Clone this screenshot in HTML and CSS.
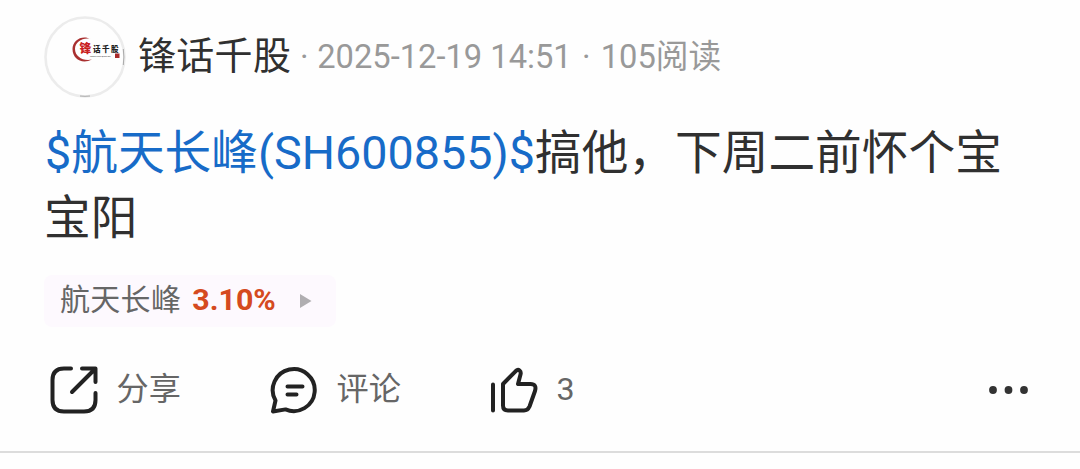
FILE: index.html
```html
<!DOCTYPE html>
<html lang="zh-CN">
<head>
<meta charset="utf-8">
<title>锋话千股</title>
<link rel="stylesheet" href="styles.css">
</head>
<body>
<article class="post">
  <header class="head">
    <div class="avatar">
      <svg viewBox="0 0 82 82" width="82" height="82">
        <circle cx="41" cy="41" r="39.5" fill="#fefefe" stroke="#ececec" stroke-width="2.6"/>
        <path d="M47 23C38 18.500 28.500 24 28.500 33C28.500 43 38 48.500 48 43.500C39 45.500 31 40.500 31 33C31 26 39 21 47 23Z" fill="#a93030"/>
        <path d="M79.300 33Q80.500 41 79.300 49M36 80Q41 80.600 46 80" fill="none" stroke="#aaa" stroke-width="1"/>
        <text x="35.500" y="36.500" class="logo-main">锋</text>
        <text x="49" y="35.500" class="logo-rest">话千股</text>
        <text x="46" y="41" class="logo-sub">FENG HUA QIAN GU</text>
        <rect x="71" y="37.500" width="4.500" height="4.500" fill="#a92a2a"/>
      </svg>
    </div>
    <span class="name">锋话千股</span>
    <span class="meta"><span class="dot">·</span><span class="date">2025-12-19 14:51</span><span class="dot dot-wide">·</span><span class="reads">105阅读</span></span>
  </header>
  <p class="content"><a class="stock">$航天长峰(SH600855)$</a>搞他，下周二前怀个宝宝阳</p>
  <div class="tag">
    <span class="tag-name">航天长峰</span>
    <span class="tag-rate">3.10%</span>
    <svg class="tag-arrow" viewBox="0 0 12 14" width="12" height="14"><path d="M0 0L11.500 7L0 14Z" fill="#b0aeb1"/></svg>
  </div>
  <footer class="actions">
    <div class="action">
      <svg class="icon" viewBox="0 0 50 50" width="50" height="50">
        <path d="M22 3.500H15Q3.500 3.500 3.500 15V35Q3.500 46.500 15 46.500H35Q46.500 46.500 46.500 35V28M33 3.500H46.500V17M45.500 4.500L23 27"/>
      </svg>
      <span class="label">分享</span>
    </div>
    <div class="action">
      <svg class="icon" viewBox="0 0 50 50" width="50" height="50">
        <path d="M4 46.500L6.500 35.500A21 21 0 1 1 16.500 44.400Z M18.500 21.500H33.500M18.500 29.500H27.500"/>
      </svg>
      <span class="label">评论</span>
    </div>
    <div class="action">
      <svg class="icon" viewBox="0 0 50 50" width="50" height="50">
        <path d="M4 19.500V45.500M14 19L27 5.800C29.500 3.400 32.500 6 31.500 9.500L29 19H41.500Q48 19 46 26L40.500 41.500Q38.700 45.500 35 45.500H19Q14 45.500 14 40.500Z"/>
      </svg>
      <span class="label">3</span>
    </div>
    <svg class="more" viewBox="0 0 40 8" width="40" height="8" fill="#333"><circle cx="5" cy="4" r="3.900"/><circle cx="20.500" cy="4" r="3.900"/><circle cx="36" cy="4" r="3.900"/></svg>
  </footer>
</article>
</body>
</html>
```
FILE: styles.css
```css
body {
  margin: 0;
  background: #fefefe;
  font-family: Roboto, "Noto Sans CJK SC", sans-serif;
}
.post {
  box-sizing: border-box;
  height: 453px;
  padding: 16px 44px 0;
  border-bottom: 2px solid #dcdcdc;
}
.head {
  display: flex;
  align-items: flex-start;
  height: 82px;
  white-space: nowrap;
}
.avatar {
  width: 82px;
  height: 82px;
  margin-right: 12px;
}
.logo-main {
  font: 900 12px "Noto Sans CJK SC", sans-serif;
  fill: #c9221f;
}
.logo-rest {
  font: 900 7.5px "Noto Sans CJK SC", sans-serif;
  letter-spacing: 1.5px;
  fill: #222;
}
.logo-sub {
  font: 700 2.3px Roboto, sans-serif;
  fill: #555;
}
.name {
  font-size: 38px;
  line-height: 81px;
  letter-spacing: 0.3px;
  color: #303030;
}
.meta {
  display: flex;
  font-size: 32.7px;
  line-height: 82px;
  color: #999;
}
.dot {
  width: 26px;
  text-align: center;
}
.dot-wide {
  width: 29px;
}
.content {
  margin: 23px 0 0;
  font-size: 46.7px;
  line-height: 65px;
  color: #303030;
  word-break: break-all;
}
.stock {
  margin-left: 1px;
  color: #176bc8;
}
.tag {
  display: flex;
  align-items: center;
  box-sizing: border-box;
  width: 292px;
  height: 52px;
  margin-top: 24px;
  padding-left: 16px;
  border-radius: 8px;
  background: #fdf9fe;
  line-height: 50px;
}
.tag-name,
.tag-rate {
  height: 52px;
}
.tag-name {
  font-size: 30px;
  letter-spacing: 0.3px;
  color: #666;
}
.tag-rate {
  margin-left: 11px;
  font-size: 30.4px;
  font-weight: 700;
  color: #d54a20;
}
.tag-arrow {
  margin-left: 24px;
}
.actions {
  display: flex;
  align-items: center;
  height: 50px;
  margin-top: 38px;
  padding-left: 5px;
}
.action {
  display: flex;
  align-items: center;
  width: 220px;
  font-size: 32.2px;
  line-height: 48px;
  color: #666;
}
.label {
  height: 50px;
}
.icon {
  margin-right: 17.5px;
  fill: none;
  stroke: #222;
  stroke-width: 4;
  stroke-linecap: round;
  stroke-linejoin: round;
}
.more {
  margin-left: auto;
  margin-right: 8px;
}
```
